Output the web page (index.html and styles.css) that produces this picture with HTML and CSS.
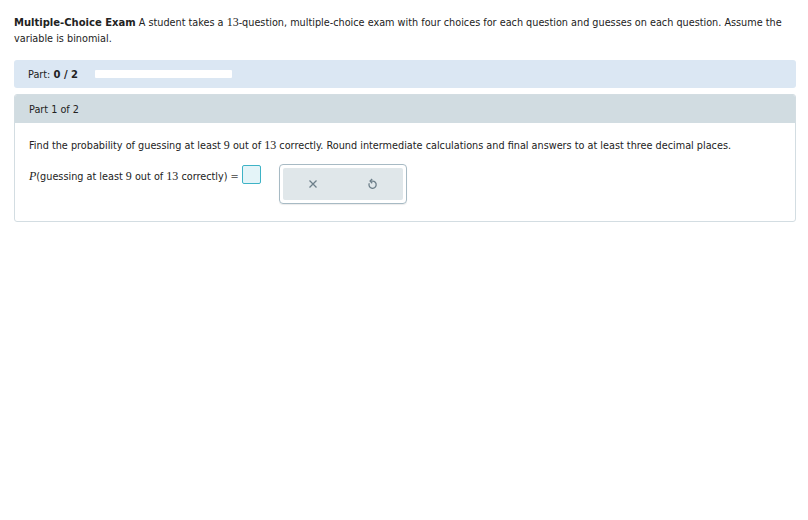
FILE: index.html
```html
<!DOCTYPE html>
<html lang="en">

<head>
    <meta charset="UTF-8">
    <title>Multiple-Choice Exam</title>
    <link rel="stylesheet" href="styles.css">
</head>

<body>
    <div class="page">
        <p class="intro"><b>Multiple-Choice Exam</b> A student takes a <span class="num">13</span>-question, multiple-choice exam with four choices for each question and guesses on each question. Assume the variable is binomial.</p>

        <div class="progress">
            <span class="progress-label">Part: <b>0 / 2</b></span>
            <div class="progress-track"></div>
        </div>

        <div class="part">
            <div class="part-header">Part 1 of 2</div>
            <div class="part-body">
                <p class="question">Find the probability of guessing at least <span class="num">9</span> out of <span class="num">13</span> correctly. Round intermediate calculations and final answers to at least three decimal places.</p>
                <div class="answer-row">
                    <span class="expr"><i class="num">P</i>(guessing at least <span class="num">9</span> out of <span class="num">13</span> correctly)<span class="eq">=</span></span>
                    <span class="answer-box"></span>
                    <div class="tools">
                        <div class="tools-inner">
                            <button type="button" class="tool" title="Clear">
                                <svg width="10" height="10" viewBox="0 0 10 10"><path d="M1.5 1.5 L8.5 8.5 M8.5 1.5 L1.5 8.5" stroke="#6d7f8a" stroke-width="1.3" fill="none"/></svg>
                            </button>
                            <button type="button" class="tool" title="Undo">
                                <svg width="11" height="12" viewBox="0 0 11 12"><path d="M2.3 5.2 A3.6 3.6 0 1 0 5.5 3.1 L4 3.1" stroke="#6d7f8a" stroke-width="1.3" fill="none"/><path d="M5.2 1 L3.1 3.1 L5.2 5.2" stroke="#6d7f8a" stroke-width="1.3" fill="none"/></svg>
                            </button>
                        </div>
                    </div>
                </div>
            </div>
        </div>
    </div>
</body>

</html>
```

FILE: styles.css
```css
body {
    margin: 0;
    font-family: "DejaVu Sans", Verdana, sans-serif;
    font-size: 9.7px;
    color: #222;
    background: #fff;
}

b {
    font-size: 10px;
}

.page {
    padding: 15px 12px 0 14px;
}

.intro {
    margin: 0;
    line-height: 16px;
}

.num {
    font-family: "Liberation Serif", "Times New Roman", serif;
    font-size: 12px;
    line-height: 1;
}

.progress {
    display: flex;
    align-items: center;
    height: 28px;
    margin-top: 13px;
    padding-left: 14px;
    background-color: #dbe7f3;
    border-radius: 3px;
}

.progress-label {
    width: 67px;
}

.progress-track {
    width: 137px;
    height: 8px;
    background-color: #fff;
    border-radius: 1px;
}

.part {
    margin-top: 6px;
    border: 1px solid #d3dde2;
    border-radius: 3px;
    overflow: hidden;
}

.part-header {
    height: 28px;
    line-height: 30px;
    padding-left: 14px;
    background-color: #d1dce1;
}

.part-body {
    padding: 16px 14px 17px 14px;
}

.question {
    margin: 0;
    line-height: 14px;
}

.answer-row {
    display: flex;
    align-items: flex-start;
    margin-top: 11px;
}

.expr {
    margin-top: 6px;
    line-height: 14px;
}

.eq {
    margin: 0 3px 0 3px;
    color: #666;
}

.answer-box {
    width: 17px;
    height: 17px;
    margin-top: 1px;
    border: 1px solid #3eb3c6;
    border-radius: 2px;
    background-color: #e4f4f8;
}

.tools {
    margin-left: 18px;
    padding: 3px;
    border: 1px solid #a7bac4;
    border-radius: 4px;
    box-shadow: 0 1px 1px rgba(0, 0, 0, 0.08);
}

.tools-inner {
    display: flex;
    width: 120px;
    height: 32px;
    background-color: #e0e7ea;
    border-radius: 2px;
}

.tool {
    flex: 1;
    border: none;
    background: transparent;
    padding: 0;
    display: flex;
    align-items: center;
    justify-content: center;
    cursor: pointer;
}
```
